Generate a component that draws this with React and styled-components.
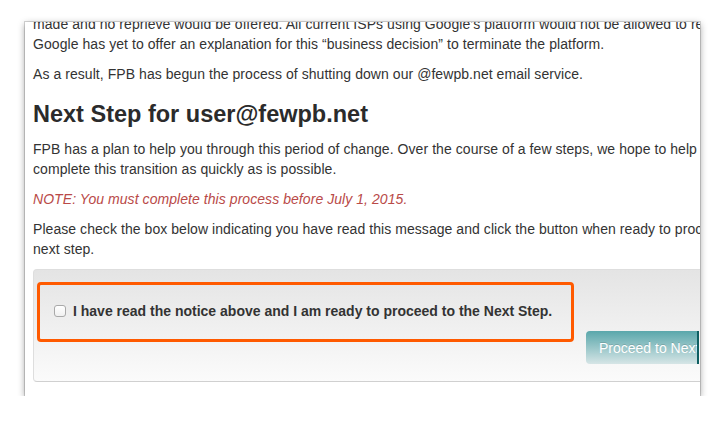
import React from 'react';
import styled, { createGlobalStyle } from 'styled-components';

const Global = createGlobalStyle`
  html, body {
    margin: 0;
    padding: 0;
    background: #ffffff;
  }
  body {
    font-family: "Liberation Sans", Arial, Helvetica, sans-serif;
    font-size: 14px;
    line-height: 20px;
    color: #333333;
  }
`;

const Page = styled.div`
  padding: 22px 0 0 25px;
`;

const Card = styled.div`
  width: 675px;
  height: 374px;
  background: #ffffff;
  overflow: hidden;
  box-shadow: 0 0 0 1px rgba(0, 0, 0, 0.15), 0 2px 7px rgba(0, 0, 0, 0.38);
`;

const Content = styled.div`
  width: 760px;
  margin-top: -8px;
  padding-left: 8px;
`;

const P = styled.p`
  margin: 0 0 10px;
  white-space: nowrap;
  letter-spacing: 0.06px;
  color: ${({ $error }) => ($error ? '#b94a48' : '#333333')};
  font-style: ${({ $error }) => ($error ? 'italic' : 'normal')};
`;

const Heading = styled.h3`
  margin: 0 0 5px;
  font-size: 23.5px;
  line-height: 40px;
  font-weight: bold;
  color: #2b2b2b;
  white-space: nowrap;
`;

const Well = styled.div`
  display: flex;
  align-items: flex-start;
  width: 720px;
  padding: 12px 0 17px 3px;
  border: 1px solid #dedede;
  border-bottom-color: #d0d0d0;
  border-radius: 4px;
  background: linear-gradient(#e4e4e4, #fbfbfb);
`;

const Highlight = styled.label`
  display: flex;
  align-items: center;
  box-sizing: border-box;
  width: 537px;
  height: 60px;
  padding: 0 0 3px 14px;
  border: 3px solid #ff5a00;
  border-radius: 4px;
  font-weight: bold;
  color: #333333;
  white-space: nowrap;
`;

const Check = styled.input`
  appearance: none;
  width: 12px;
  height: 12px;
  margin: 0 7px 0 0;
  border: 1px solid #a9a9a9;
  border-radius: 3px;
  background: linear-gradient(#ffffff, #f0f0f0);
`;

const Button = styled.button`
  box-sizing: border-box;
  width: 113px;
  height: 33px;
  margin: 49px 0 0 12px;
  padding: 0 0 0 13px;
  overflow: hidden;
  white-space: nowrap;
  text-align: left;
  font-family: inherit;
  font-size: 14px;
  color: #ffffff;
  text-shadow: 0 -1px 0 rgba(0, 0, 0, 0.15);
  border: none;
  border-right: 2px solid #0f5f62;
  border-radius: 4px 0 0 4px;
  background: linear-gradient(#5aa7ab, #d6e5e6);
`;

export default function App() {
  return (
    <>
      <Global />
      <Page>
        <Card>
          <Content>
            <P>
              made and no reprieve would be offered. All current ISPs using Google’s platform would not be allowed to resume service.
              <br />
              Google has yet to offer an explanation for this “business decision” to terminate the platform.
            </P>
            <P>As a result, FPB has begun the process of shutting down our @fewpb.net email service.</P>
            <Heading>Next Step for user@fewpb.net</Heading>
            <P>
              FPB has a plan to help you through this period of change. Over the course of a few steps, we hope to help you
              <br />
              complete this transition as quickly as is possible.
            </P>
            <P $error>NOTE: You must complete this process before July 1, 2015.</P>
            <P>
              Please check the box below indicating you have read this message and click the button when ready to proceed to the
              <br />
              next step.
            </P>
            <Well>
              <Highlight>
                <Check type="checkbox" />
                I have read the notice above and I am ready to proceed to the Next Step.
              </Highlight>
              <Button type="button">Proceed to Next Step</Button>
            </Well>
          </Content>
        </Card>
      </Page>
    </>
  );
}
